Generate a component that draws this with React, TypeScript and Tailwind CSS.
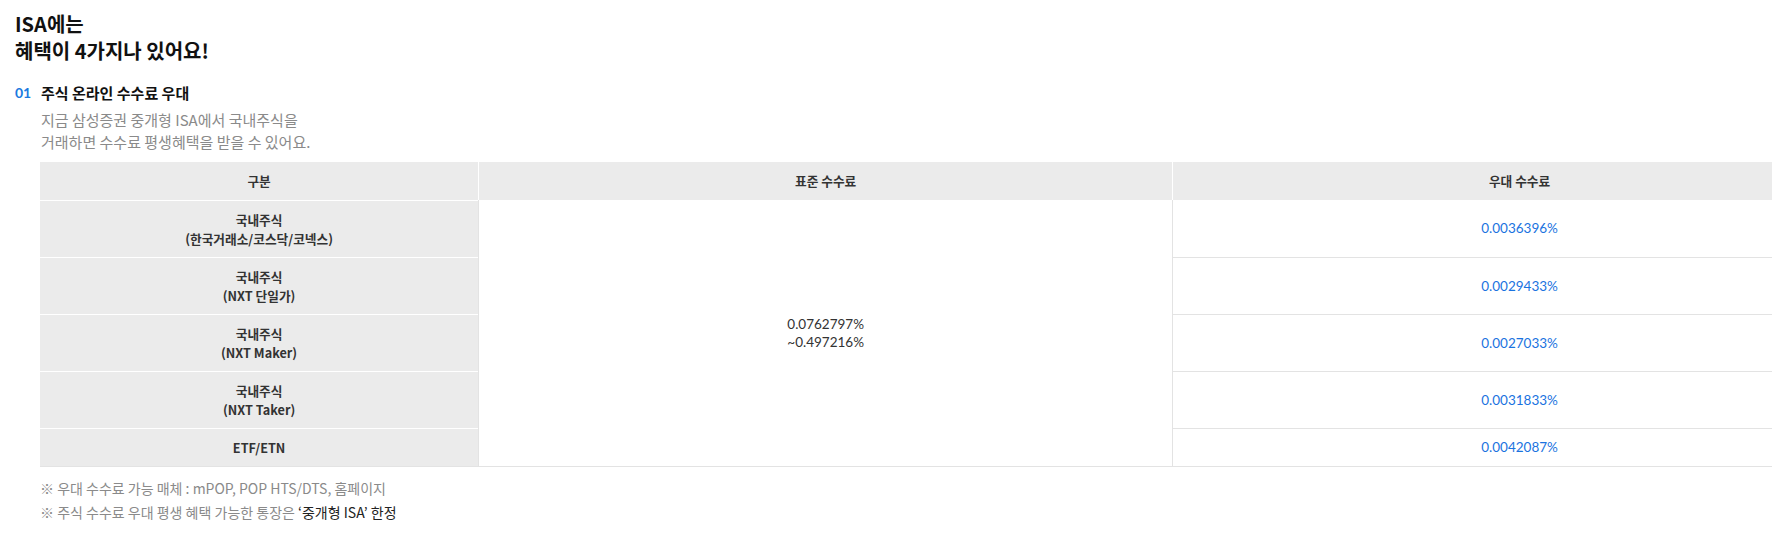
import React from "react";

interface FeeRow {
  label: string[];
  rate: string;
  height: string;
}

const rows: FeeRow[] = [
  { label: ["국내주식", "(한국거래소/코스닥/코넥스)"], rate: "0.0036396%", height: "h-[57px]" },
  { label: ["국내주식", "(NXT 단일가)"], rate: "0.0029433%", height: "h-[57px]" },
  { label: ["국내주식", "(NXT Maker)"], rate: "0.0027033%", height: "h-[57px]" },
  { label: ["국내주식", "(NXT Taker)"], rate: "0.0031833%", height: "h-[57px]" },
  { label: ["ETF/ETN"], rate: "0.0042087%", height: "h-[38px]" },
];

// Korean copy uses Noto CJK, numbers use Lato
const kr = "font-['Noto_Sans_CJK_KR','Noto_Sans',sans-serif]";
const num = "font-['Lato','Noto_Sans_CJK_KR',sans-serif]";

export default function App() {
  return (
    <div className={`w-[1772px] h-[534px] overflow-hidden bg-white pl-[15px] pt-[10px] ${kr}`}>
      {/* Title */}
      <h1 className="text-[20px] leading-[27px] font-bold text-[#111]">
        ISA에는
        <br />
        혜택이 4가지나 있어요!
      </h1>

      {/* Section 01 */}
      <div className="mt-[19px] flex items-center text-[15px] leading-[20px] font-bold">
        <span className={`w-[26px] text-[#1a7ae0] text-[14px] ${num}`}>01</span>
        <span className="text-[#111]">주식 온라인 수수료 우대</span>
      </div>
      <p className="mt-[6px] pl-[26px] text-[15px] leading-[22px] text-[#8a8a8a]">
        지금 삼성증권 중개형 ISA에서 국내주식을
        <br />
        거래하면 수수료 평생혜택을 받을 수 있어요.
      </p>

      {/* Table */}
      <table className="mt-[9px] ml-[25px] w-[1826px] table-fixed border-separate border-spacing-0 border-b border-[#e3e3e3] text-[12.7px]">
        <colgroup>
          <col className="w-[24%]" />
          <col className="w-[38%]" />
          <col className="w-[38%]" />
        </colgroup>
        <thead>
          <tr className="h-[38px] bg-[#ebebeb] text-[#333]">
            <th className="font-bold">구분</th>
            <th className="font-bold border-l border-white">표준 수수료</th>
            <th className="font-bold border-l border-white">우대 수수료</th>
          </tr>
        </thead>
        <tbody>
          {rows.map((r, i) => (
            <tr key={i} className={r.height}>
              <td className="bg-[#ebebeb] border-t border-white text-center font-bold text-[#333] leading-[19px]">
                {r.label.map((l, j) => (
                  <div key={j}>{l}</div>
                ))}
              </td>
              {i === 0 && (
                <td
                  rowSpan={rows.length}
                  className={`border-l border-[#e3e3e3] text-center text-[13.5px] leading-[18px] text-[#333] ${num}`}
                >
                  0.0762797%
                  <br />
                  ~0.497216%
                </td>
              )}
              <td
                className={`border-l border-[#e3e3e3] text-center text-[13.5px] text-[#1a73e0] ${num} ${
                  i === 0 ? "" : "border-t"
                }`}
              >
                {r.rate}
              </td>
            </tr>
          ))}
        </tbody>
      </table>

      {/* Notes */}
      <div className="mt-[9px] ml-[25px] text-[14px] leading-[24px] text-[#8a8a8a]">
        <p>※ 우대 수수료 가능 매체 : mPOP, POP HTS/DTS, 홈페이지</p>
        <p>
          ※ 주식 수수료 우대 평생 혜택 가능한 통장은 <span className="text-[#222]">‘중개형 ISA’ 한정</span>
        </p>
      </div>
    </div>
  );
}
